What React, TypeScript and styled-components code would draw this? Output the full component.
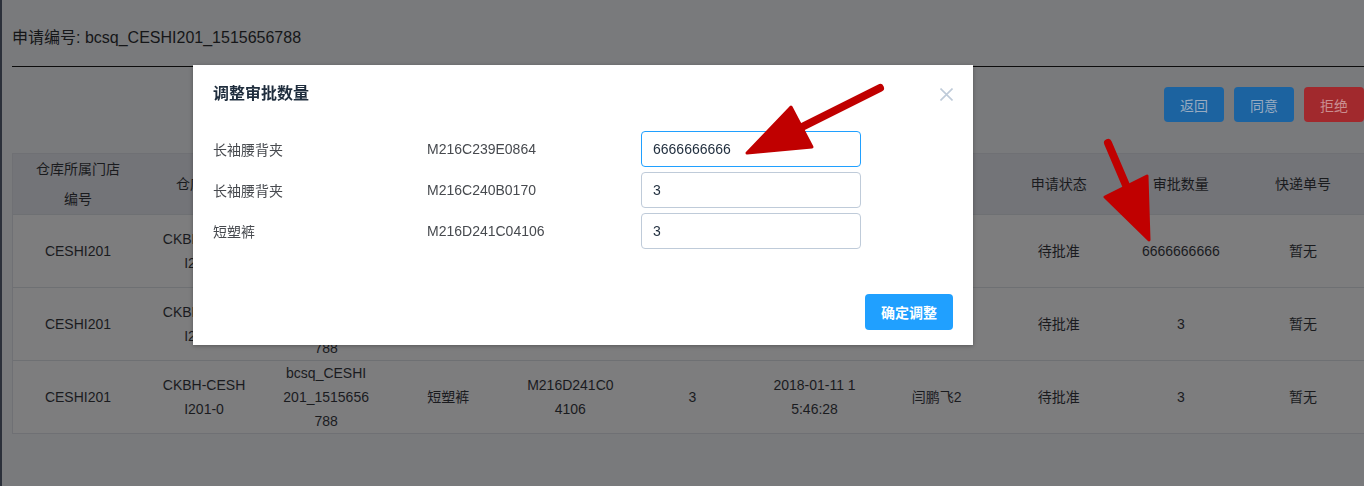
import React from 'react'
import styled, { createGlobalStyle } from 'styled-components'

type Tone = 'primary' | 'danger'

type Cell = string[]

const GlobalStyle = createGlobalStyle`
  html, body {
    margin: 0;
    padding: 0;
    height: 486px;
    overflow: hidden;
  }
  body {
    font-family: 'Liberation Sans', 'Noto Sans CJK SC', sans-serif;
    font-size: 14px;
    background: #797a7c;
  }
  * {
    box-sizing: border-box;
  }
`

const Layout = styled.div`
  display: flex;
  height: 486px;
  background: #797a7c;
`

const SideEdge = styled.div`
  flex: none;
  width: 2px;
  background: #2b303a;
`

const Main = styled.main`
  flex: 1;
  min-width: 0;
  padding: 26px 0 0 10px;
`

const PageTitle = styled.h2`
  margin: 0;
  padding-bottom: 16px;
  border-bottom: 1px solid #0c0c0c;
  font-size: 16px;
  font-weight: normal;
  line-height: 24px;
  color: #151618;
`

const Toolbar = styled.div`
  display: flex;
  justify-content: flex-end;
  gap: 10px;
  margin: 20px 0 31px;
`

const ActionButton = styled.button<{ $tone: Tone }>`
  width: 60px;
  height: 35px;
  border: none;
  border-radius: 4px;
  font-family: inherit;
  font-size: 14px;
  background: ${(p) => (p.$tone === 'danger' ? '#a1292d' : '#1c63a0')};
  color: ${(p) => (p.$tone === 'danger' ? '#c98e90' : '#98abc0')};
`

const Table = styled.div`
  border: 1px solid #6f7074;
  border-right: none;
`

const Row = styled.div<{ $head?: boolean }>`
  display: grid;
  grid-template-columns: 130px repeat(10, 1fr);
  min-height: ${(p) => (p.$head ? '60px' : '72px')};
  background: ${(p) => (p.$head ? '#737478' : '#7d7d7e')};
  line-height: ${(p) => (p.$head ? '30px' : '24px')};
  color: #1a1b1e;
  & + & {
    border-top: 1px solid #6e7073;
  }
`

const TableCell = styled.div`
  display: flex;
  flex-direction: column;
  justify-content: center;
  align-items: center;
  text-align: center;
  white-space: nowrap;
  overflow: hidden;
`

const Mask = styled.div`
  position: fixed;
  inset: 0;
`

const Dialog = styled.div`
  position: absolute;
  left: 193px;
  top: 65px;
  width: 780px;
  height: 280px;
  display: flex;
  flex-direction: column;
  background: #fff;
  box-shadow: 0 1px 4px rgba(0, 0, 0, 0.3);
`

const DialogHeader = styled.div`
  display: flex;
  justify-content: space-between;
  align-items: center;
  padding: 20px 20px 0;
`

const DialogTitle = styled.span`
  font-size: 16px;
  line-height: 18px;
  font-weight: bold;
  color: #1f2d3d;
`

const CloseButton = styled.button`
  display: flex;
  padding: 0;
  border: none;
  background: none;
`

const DialogBody = styled.div`
  display: flex;
  flex-direction: column;
  gap: 5px;
  padding: 28px 20px 0;
`

const ItemRow = styled.div`
  display: grid;
  grid-template-columns: 214px 214px 220px;
  align-items: center;
  height: 36px;
  color: #474a4f;
`

const Quantity = styled.input<{ $focused?: boolean }>`
  width: 220px;
  height: 36px;
  padding: 0 11px;
  border: 1px solid ${(p) => (p.$focused ? '#20a0ff' : '#bfcbd9')};
  border-radius: 4px;
  outline: none;
  font-family: inherit;
  font-size: 14px;
  color: #1f2d3d;
`

const DialogFooter = styled.div`
  display: flex;
  justify-content: flex-end;
  margin-top: auto;
  padding: 0 20px 15px;
`

const ConfirmButton = styled.button`
  width: 88px;
  height: 36px;
  border: none;
  border-radius: 4px;
  background: #20a0ff;
  color: #fff;
  font-family: inherit;
  font-size: 14px;
  font-weight: bold;
`

const Annotations = styled.svg`
  position: fixed;
  left: 0;
  top: 0;
  pointer-events: none;
`

const headers: Cell[] = [
  ['仓库所属门店', '编号'],
  ['仓库编号'],
  ['申请编号'],
  ['商品名称'],
  ['商品编码'],
  ['申请数量'],
  ['申请时间'],
  ['申请人'],
  ['申请状态'],
  ['审批数量'],
  ['快递单号'],
]

const rows: Cell[][] = [
  [
    ['CESHI201'],
    ['CKBH-CESH', 'I201-0'],
    ['bcsq_CESHI', '201_1515656', '788'],
    ['长袖腰背夹'],
    ['M216C239E0', '864'],
    ['3'],
    ['2018-01-11 1', '5:46:28'],
    ['闫鹏飞2'],
    ['待批准'],
    ['6666666666'],
    ['暂无'],
  ],
  [
    ['CESHI201'],
    ['CKBH-CESH', 'I201-0'],
    ['bcsq_CESHI', '201_1515656', '788'],
    ['长袖腰背夹'],
    ['M216C240B0', '170'],
    ['3'],
    ['2018-01-11 1', '5:46:28'],
    ['闫鹏飞2'],
    ['待批准'],
    ['3'],
    ['暂无'],
  ],
  [
    ['CESHI201'],
    ['CKBH-CESH', 'I201-0'],
    ['bcsq_CESHI', '201_1515656', '788'],
    ['短塑裤'],
    ['M216D241C0', '4106'],
    ['3'],
    ['2018-01-11 1', '5:46:28'],
    ['闫鹏飞2'],
    ['待批准'],
    ['3'],
    ['暂无'],
  ],
]

const items = [
  { name: '长袖腰背夹', code: 'M216C239E0864', qty: '6666666666' },
  { name: '长袖腰背夹', code: 'M216C240B0170', qty: '3' },
  { name: '短塑裤', code: 'M216D241C04106', qty: '3' },
]

const renderCell = (lines: Cell, index: number) => (
  <TableCell key={index}>
    {lines.map((line, i) => (
      <span key={i}>{line}</span>
    ))}
  </TableCell>
)

export default function App() {
  return (
    <>
      <GlobalStyle />
      <Layout>
        <SideEdge />
        <Main>
          <PageTitle>申请编号: bcsq_CESHI201_1515656788</PageTitle>
          <Toolbar>
            <ActionButton $tone="primary">返回</ActionButton>
            <ActionButton $tone="primary">同意</ActionButton>
            <ActionButton $tone="danger">拒绝</ActionButton>
          </Toolbar>
          <Table>
            <Row $head>{headers.map(renderCell)}</Row>
            {rows.map((row, i) => (
              <Row key={i}>{row.map(renderCell)}</Row>
            ))}
          </Table>
        </Main>
      </Layout>

      <Mask>
        <Dialog>
          <DialogHeader>
            <DialogTitle>调整审批数量</DialogTitle>
            <CloseButton>
              <svg width="13" height="13" viewBox="0 0 13 13">
                <path d="M0.5 0.5 L12.5 12.5 M12.5 0.5 L0.5 12.5" stroke="#bfcbd9" strokeWidth="1.6" />
              </svg>
            </CloseButton>
          </DialogHeader>
          <DialogBody>
            {items.map((item, i) => (
              <ItemRow key={i}>
                <span>{item.name}</span>
                <span>{item.code}</span>
                <Quantity $focused={i === 0} defaultValue={item.qty} readOnly />
              </ItemRow>
            ))}
          </DialogBody>
          <DialogFooter>
            <ConfirmButton>确定调整</ConfirmButton>
          </DialogFooter>
        </Dialog>
      </Mask>

      <Annotations width="1364" height="486" viewBox="0 0 1364 486">
        <g fill="#c00000" stroke="#c00000" strokeLinecap="round" strokeLinejoin="round">
          <path d="M880 88 L800 128" strokeWidth="8" fill="none" />
          <path d="M747 153 L791 107 L812 147 Z" strokeWidth="3" />
          <path d="M1108 143 L1128 190" strokeWidth="8" fill="none" />
          <path d="M1149 240 L1105 197 L1147 176 Z" strokeWidth="3" />
        </g>
      </Annotations>
    </>
  )
}
